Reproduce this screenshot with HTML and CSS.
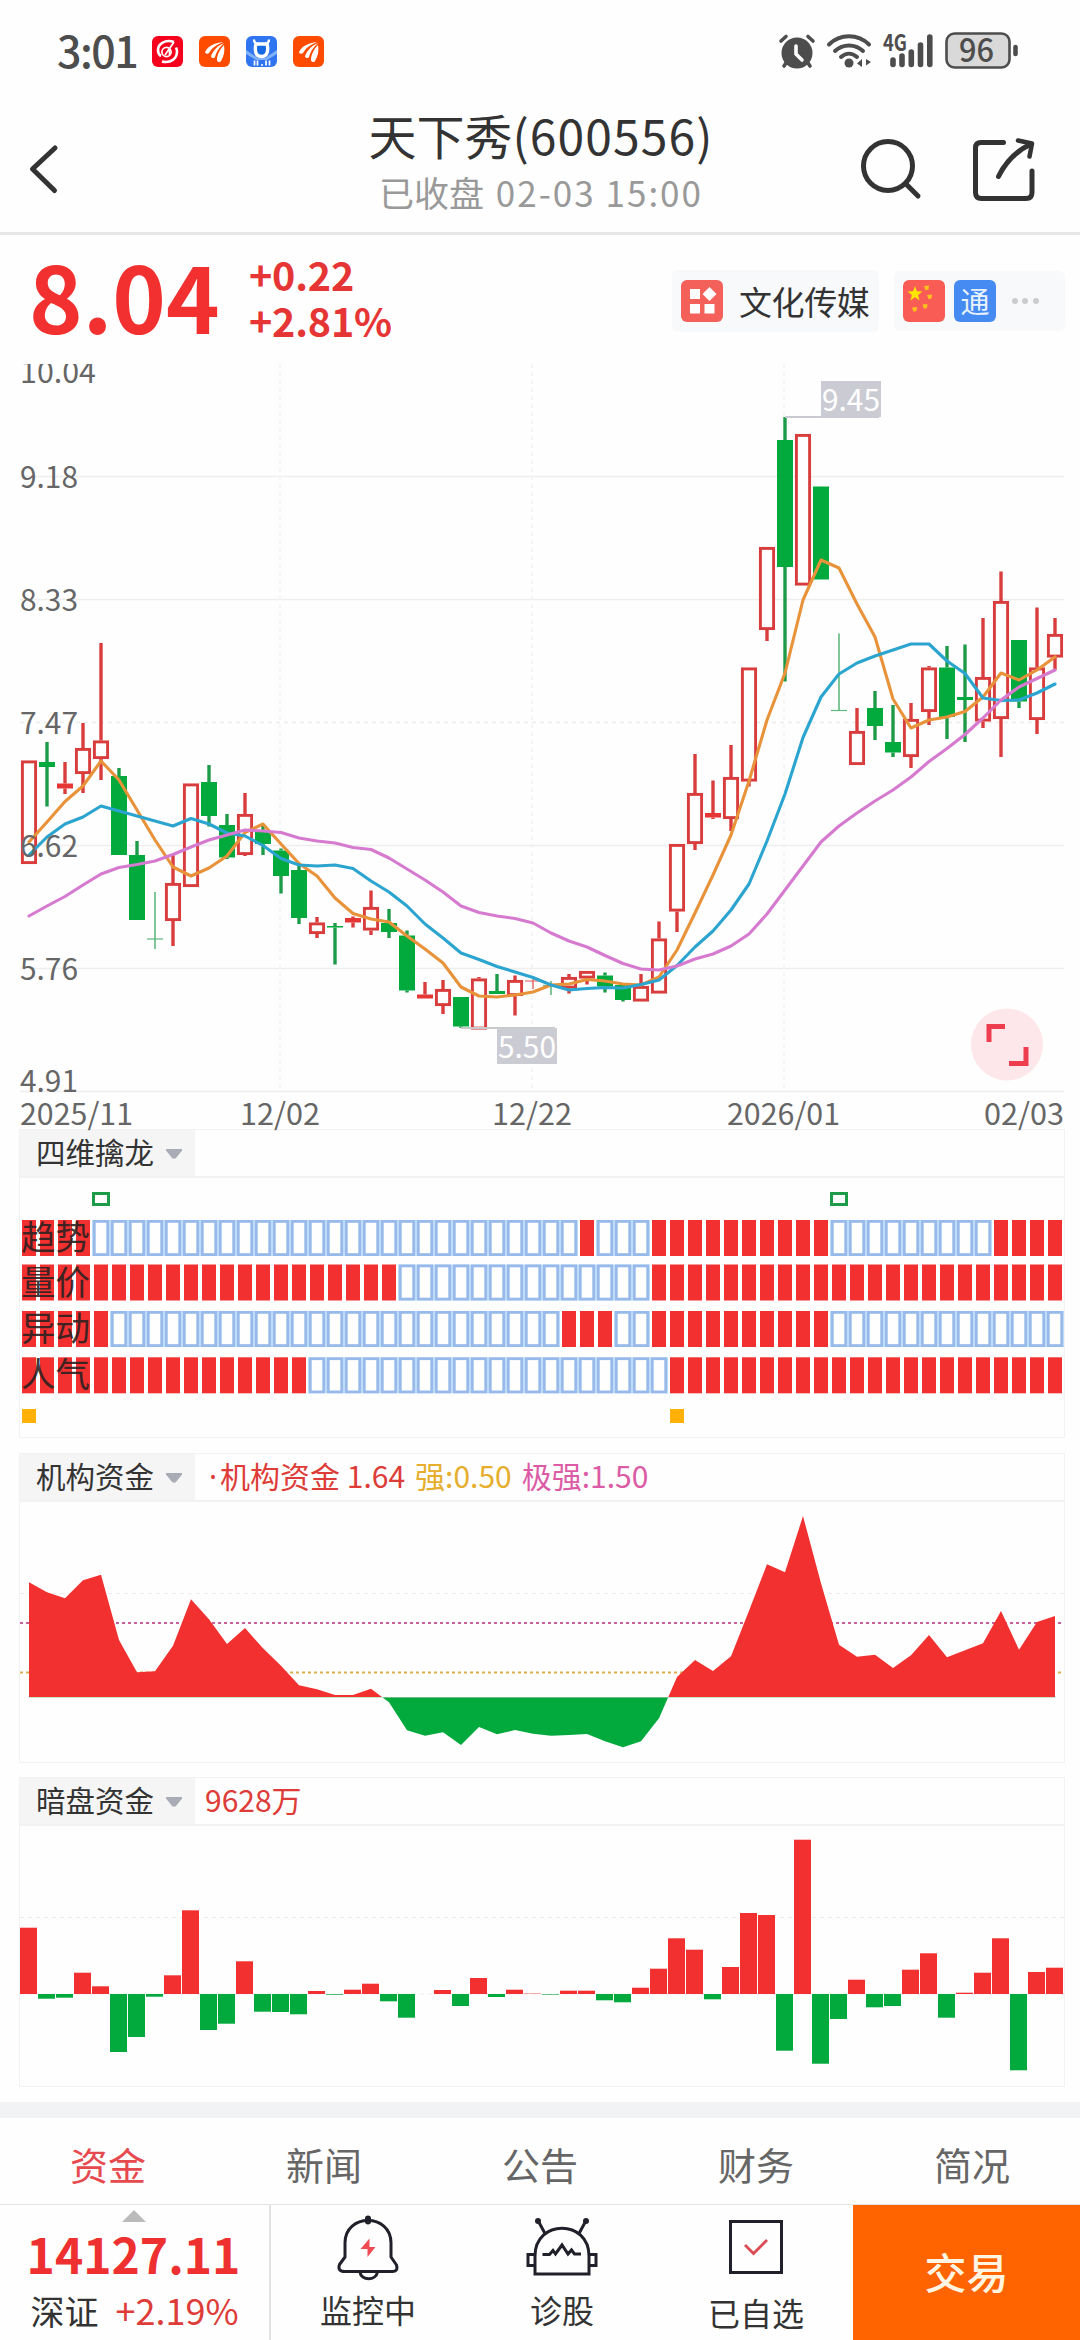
FILE: index.html
```
<!DOCTYPE html>
<html lang="zh-CN">
<head>
  <meta charset="UTF-8" />
  <meta name="viewport" content="width=device-width, initial-scale=1.0"/>
  <title>天下秀(600556)</title>
  <link rel="stylesheet" href="styles.css">
</head>
<body>
  <!-- Barra de estado -->
  <div class="status">
    <span class="clock">3:01</span>
    <div class="apps">
      <svg width="31" height="31" viewBox="0 0 31 31"><rect width="31" height="31" rx="6" fill="#f5001d"/><path d="M22 6C13 3 6 8 6 14c0 3 1 5 3 6M10 25.500c9 2 15-3 15-10 0-2-.5-3-1-4" fill="none" stroke="#fff" stroke-width="2.600"/><circle cx="14.500" cy="16" r="4.600" fill="none" stroke="#fff" stroke-width="1.700"/><path d="M22 6l-9 13M17.500 12v7" stroke="#fff" stroke-width="1.700"/></svg>
      <svg width="31" height="31" viewBox="0 0 31 31"><rect width="31" height="31" rx="6" fill="#ff4b00"/><g fill="#fff"><path d="M6 16C9 10 15 7 24 6c-7 3-11 6-14 11-1 1-4 1-4-1z"/><path d="M12 20c2-5 6-10 13-13-5 5-8 9-9 14-1 2-4 1-4-1z"/><path d="M18 24c0-5 3-11 7-15 1 6 0 11-3 16-1 2-4 1-4-1z"/></g></svg>
      <svg width="31" height="31" viewBox="0 0 31 31"><rect width="31" height="31" rx="6" fill="#2f74f0"/><path d="M0 14l12 8h7l12-8v4l-10 6H10L0 18z" fill="#7fb0fb"/><path d="M10 8c0 0-1 3-.5 7C10 19 12 20.500 15.500 20.500S21 19 21.500 15c.5-4-.5-7-.5-7z" fill="#1668e3" stroke="#fff" stroke-width="3.400"/><path d="M8 3.500c0 3 1.500 4 4 4.500M23 3.500c0 3-1.500 4-4 4.500" stroke="#fff" stroke-width="2.400" fill="none"/><path d="M8.500 24.500v5M11.500 24.500v5M20 24.500v5M23.500 24.500v5" stroke="#fff" stroke-width="1.700"/><circle cx="16" cy="29" r="1" fill="#fff"/></svg>
      <svg width="31" height="31" viewBox="0 0 31 31"><rect width="31" height="31" rx="6" fill="#ff4b00"/><g fill="#fff"><path d="M6 16C9 10 15 7 24 6c-7 3-11 6-14 11-1 1-4 1-4-1z"/><path d="M12 20c2-5 6-10 13-13-5 5-8 9-9 14-1 2-4 1-4-1z"/><path d="M18 24c0-5 3-11 7-15 1 6 0 11-3 16-1 2-4 1-4-1z"/></g></svg>
    </div>
    <svg class="signals" width="240" height="50" viewBox="779 21 240 50">
      <g stroke="#4d4d4d" fill="none" stroke-linecap="round">
        <circle cx="797" cy="53" r="15.500" fill="#4d4d4d" stroke="none"/>
        <path d="M781 41l5-4.500M813 41l-5-4.500M786 63l-2 3M808 63l2 3" stroke-width="3.600"/>
        <path d="M796 46v8l6 6" stroke="#fff" stroke-width="3.600"/>
        <path d="M829 44.500c11-11 29-11 40 0M835 51c8-7.500 20-7.500 28 0M841 57c5-4.500 11-4.500 16 0" stroke-width="4"/>
        <circle cx="849" cy="63" r="4.500" fill="#4d4d4d" stroke="none"/>
        <path d="M862 59v8l-5-3.500zM864.500 59v8M866 59l5 3-5 3.500" fill="#4d4d4d" stroke="none"/>
        <path d="M893 60v4.500M902 56v8.500M911.300 52v12.500M920.500 45v19.500M929.800 37v27.500" stroke-width="5.600"/>
        <rect x="946.500" y="33.500" width="63" height="34" rx="8" fill="#d9d9d9" stroke-width="2.600"/>
        <path d="M1015.500 47v7" stroke-width="4.600"/>
      </g>
      <text class="net" x="883" y="50.500" textLength="24" lengthAdjust="spacingAndGlyphs">4G</text>
      <text class="batt" x="959" y="62" textLength="35" lengthAdjust="spacingAndGlyphs">96</text>
    </svg>
  </div>

  <!-- Cabecera -->
  <header class="header">
    <svg class="back" width="36" height="56" viewBox="26 141 36 56"><path d="M55 148L32.500 169 54.500 190.500" fill="none" stroke="#333" stroke-width="5" stroke-linecap="round" stroke-linejoin="round"/></svg>
    <div class="title">
      <h1>天下秀<span>(600556)</span></h1>
      <p>已收盘 <span>02-03 15:00</span></p>
    </div>
    <svg class="actions" width="186" height="70" viewBox="856 134 186 70">
      <g fill="none" stroke="#333" stroke-width="5" stroke-linecap="round">
        <circle cx="888" cy="166" r="24.500"/>
        <path d="M905.500 183.500L918 196"/>
        <path d="M1003.500 142.500H981q-5.500 0-5.500 5.500v44.500q0 6 6 6h44.500q6 0 6-6V171"/>
        <path d="M998.500 176.500C1005 163 1014 152 1031 144" stroke-linejoin="miter"/>
        <path d="M1018 140.500l14 3-2.500 13" stroke-linejoin="round" stroke-width="4.500"/>
      </g>
    </svg>
  </header>

  <!-- Precio -->
  <section class="quote">
    <div class="price">8.04</div>
    <div class="change"><span>+0.22</span><span>+2.81%</span></div>
    <div class="tag sector">
      <svg width="42" height="42" viewBox="0 0 42 42"><rect width="42" height="42" rx="6" fill="#f4605a"/><path d="M9 9h10v10H9zM9 24h10v9.500H9zM23.500 24h10v9.500h-10zM28.500 7l7 7-7 7-7-7z" fill="#fff"/></svg>
      <span>文化传媒</span>
    </div>
    <div class="tag badges">
      <svg width="42" height="42" viewBox="0 0 42 42"><rect width="42" height="42" rx="6" fill="#f85c54"/><path d="M12 6l1.900 5.300 5.600.2-4.400 3.500 1.500 5.400-4.600-3.200L7.400 20.400 8.900 15 4.500 11.500l5.600-.2z" fill="#ffe600"/><g fill="#ffc21c"><path d="M21 6l5-.5-.5 4-3 .8zM24 15l5-.5-.5 4-3 .8zM19.500 24.500l5-.5-.5 4-3 .8zM9 27.500l5-.5-.5 4-3 .8z"/></g></svg>
      <span class="tong">通</span>
      <i></i><i></i><i></i>
    </div>
  </section>

  <svg id="kline" class="kline" width="1080" height="765" viewBox="0 364 1080 765"></svg>

  <section class="panel siwei">
    <div class="panel-head"><button>四维擒龙<b></b></button></div>
    <svg id="siwei" width="1044" height="260" viewBox="20 1178 1044 260"></svg>
  </section>

  <section class="panel jigou">
    <div class="panel-head">
      <button>机构资金<b></b></button>
      <span class="up"><em>·</em>机构资金 1.64</span><span class="strong">强:0.50</span><span class="extreme">极强:1.50</span>
    </div>
    <svg id="jigou" width="1044" height="260" viewBox="20 1502 1044 260"></svg>
  </section>

  <section class="panel anpan">
    <div class="panel-head"><button>暗盘资金<b></b></button><span class="up">9628万</span></div>
    <svg id="anpan" width="1044" height="260" viewBox="20 1826 1044 260"></svg>
  </section>

  <nav class="tabs">
    <a class="active">资金</a><a>新闻</a><a>公告</a><a>财务</a><a>简况</a>
  </nav>

  <footer class="bottom">
    <div class="index">
      <i class="caret"></i>
      <strong>14127.11</strong>
      <p>深证<span>+2.19%</span></p>
    </div>
    <div class="tool">
      <svg width="64" height="68" viewBox="336 2214 64 68">
        <g fill="none" stroke="#20202a" stroke-width="3" stroke-linejoin="round">
          <path d="M345 2257V2243c0-30 46-30 46 0v14l5.500 8q2 7-5 6.500H345q-8 0-5.500-7z"/>
          <path d="M360 2272c1 9 16 9 17.500 0"/>
          <path d="M368 2218.500v3" stroke-width="6" stroke-linecap="round"/>
        </g>
        <path d="M369.500 2238.500v8.500h6l-8 10v-8h-7z" fill="#f04a52"/>
      </svg>
      <span>监控中</span>
    </div>
    <div class="tool">
      <svg width="74" height="68" viewBox="525 2214 74 68">
        <g fill="none" stroke="#20202a" stroke-width="3">
          <path d="M535 2274V2256c0-37 54-37 54 0v18z"/>
          <path d="M535 2254.500h-7v11h7M589 2254.500h7v11h-7"/>
          <path d="M538.500 2221.500l6.500 12M585.500 2221.500l-6.500 12"/>
          <path d="M542.500 2254.500h7l3.500-4 2.500 3.500 6.500-9 6 9 3.500-4 3 4h6.500"/>
        </g>
        <circle cx="538" cy="2221" r="3" fill="#20202a"/><circle cx="586" cy="2221" r="3" fill="#20202a"/>
      </svg>
      <span>诊股</span>
    </div>
    <div class="tool last">
      <svg width="64" height="68" viewBox="724 2214 64 68">
        <rect x="730.500" y="2221.500" width="51" height="51" fill="none" stroke="#20202a" stroke-width="3"/>
        <path d="M745 2245l8.500 8.500L767 2240" fill="none" stroke="#dc4a54" stroke-width="2.800"/>
      </svg>
      <span>已自选</span>
    </div>
    <div class="trade">交易</div>
  </footer>

  <script src="charts.js"></script>
</body>
</html>
```

FILE: styles.css
```
* {
  box-sizing: border-box;
}

body {
  margin: 0;
  width: 1080px;
  height: 2340px;
  overflow: hidden;
  background: #fefefe;
  color: #333;
  font-family: 'Noto Sans CJK SC', 'Noto Sans', sans-serif;
  display: flex;
  flex-direction: column;
}

svg {
  display: block;
  flex: none;
}

h1, p {
  margin: 0;
  font-weight: 400;
}

/* Barra de estado */
.status {
  height: 104px;
  flex: none;
  display: flex;
  align-items: flex-start;
  padding: 21px 61px 0 57px;
}

.clock {
  width: 95px;
  padding-top: 9px;
  font-size: 43px;
  line-height: 38px;
  letter-spacing: -1.500px;
  font-weight: 500;
  color: #4d4d4d;
}

.apps {
  display: flex;
  gap: 16px;
  padding-top: 15px;
}

.signals {
  margin-left: auto;
  overflow: visible;
}

.net {
  font-size: 23px;
  font-weight: 700;
  fill: #4d4d4d;
}

.batt {
  font-size: 33px;
  font-weight: 500;
  fill: #4d4d4d;
}

/* Cabecera */
.header {
  height: 131px;
  flex: none;
  display: flex;
  justify-content: space-between;
  border-bottom: 3px solid #e6e6e6;
  padding: 0 38px 0 26px;
}

.back {
  margin-top: 37px;
  margin-right: 164px;
}

.actions {
  margin-top: 30px;
}

.title {
  text-align: center;
  white-space: nowrap;
}

.title h1 {
  font-size: 48px;
  line-height: 60px;
  color: #333;
}

.title h1 span {
  letter-spacing: 1.100px;
}

.title p {
  font-size: 35px;
  line-height: 50px;
  margin-top: 3px;
  color: #999;
}

.title p span {
  margin-left: 4px;
  letter-spacing: 2px;
}

/* Precio y etiquetas */
.quote {
  height: 129px;
  flex: none;
  display: flex;
  align-items: flex-start;
  padding: 0 15px 0 29px;
}

.price {
  width: 220px;
  padding-top: 13px;
  font-size: 91px;
  line-height: 92px;
  font-weight: 700;
  color: #f33030;
}

.change {
  display: flex;
  flex-direction: column;
  padding-top: 16px;
  font-size: 39.500px;
  line-height: 46px;
  font-weight: 700;
  letter-spacing: -0.200px;
  color: #e63535;
}

.tag {
  display: flex;
  align-items: center;
  background: #f8f9fb;
  border-radius: 6px;
}

.sector {
  width: 207px;
  height: 62px;
  margin: 35px 15px 0 auto;
  padding-left: 9px;
}

.sector span {
  margin-left: 16px;
  font-size: 33px;
  line-height: 40px;
  letter-spacing: -0.400px;
}

.badges {
  width: 171px;
  height: 60px;
  margin-top: 36px;
  padding-left: 9px;
}

.tong {
  width: 42px;
  height: 42px;
  margin: 0 16px 0 9px;
  border-radius: 6px;
  background: #458bf2;
  color: #e8f2ff;
  font-size: 29px;
  line-height: 40px;
  text-align: center;
}

.badges i {
  width: 6px;
  height: 6px;
  margin-right: 4.300px;
  border-radius: 50%;
  background: #ccc;
}

/* Velas */
.kline {
  overflow: visible;
  clip-path: inset(0 0 -12px 0);
}

.kline text {
  font-size: 30px;
  fill: #666;
}

.kline .mark {
  fill: #fff;
}

/* Paneles de indicadores */
.panel {
  width: 1046px;
  margin-left: 19px;
  flex: none;
  border: 1.500px solid #f1f2f4;
}

.siwei {
  height: 309px;
}

.jigou {
  height: 310px;
  margin-top: 15px;
}

.anpan {
  height: 310px;
  margin-top: 14px;
}

.panel-head {
  height: 48px;
  display: flex;
  align-items: stretch;
  border-bottom: 2px solid #f1f2f4;
  font-size: 30px;
  line-height: 43px;
  white-space: pre;
}

.panel-head button {
  width: 175px;
  margin-right: 10px;
  padding: 0 0 3px 16px;
  border: 0;
  background: #f5f5f5;
  color: #333;
  font: inherit;
  font-size: 29.500px;
  display: flex;
  align-items: center;
}

.panel-head b {
  width: 16px;
  height: 10px;
  margin: 4px 0 0 12px;
  background: #a9abb5;
  clip-path: polygon(0 0, 100% 0, 100% 20%, 60% 100%, 40% 100%, 0 20%);
}

.panel-head span {
  margin-right: 10px;
}

.panel-head em {
  margin: 0 3px 0 4px;
  font-family: 'Noto Sans', sans-serif;
  font-style: normal;
  line-height: 30px;
}

.up {
  color: #dd3c38;
}

.strong {
  color: #e6ae2c;
}

.extreme {
  color: #dc5ba5;
}

.row-name {
  font-size: 34px;
  fill: #282020;
  fill-opacity: 0.88;
}

/* Pestañas */
.tabs {
  height: 103px;
  flex: none;
  margin-top: 15px;
  border-top: 16px solid #f2f3f5;
  border-bottom: 1.500px solid #e4e4e4;
  display: flex;
}

.tabs a {
  flex: 1;
  text-align: center;
  font-size: 38px;
  line-height: 91px;
  color: #666;
}

.tabs .active {
  color: #e64a4f;
}

/* Barra inferior */
.bottom {
  flex: 1;
  display: flex;
  text-align: center;
}

.index {
  width: 271px;
  border-right: 2px solid #e2e2e2;
  display: flex;
  flex-direction: column;
}

.caret {
  width: 24px;
  height: 12px;
  margin: 5px 0 0 122px;
  background: #bbb;
  clip-path: polygon(50% 0, 100% 100%, 0 100%);
}

.index strong {
  margin: 2px 2px 2px 0;
  font-size: 48px;
  line-height: 58px;
  color: #ee3030;
}

.index p {
  font-size: 34px;
  line-height: 50px;
}

.index p span {
  margin-left: 17px;
  font-size: 36px;
  color: #dd3c38;
}

.tool {
  width: 194px;
  padding-top: 9px;
  font-size: 32px;
  line-height: 48px;
  display: flex;
  flex-direction: column;
  align-items: center;
}

.tool span {
  margin-top: 3px;
}

.last span {
  margin-top: 6px;
}

.trade {
  flex: 1;
  background: #ff6400;
  color: #fff5e2;
  font-size: 42px;
  font-weight: 500;
  line-height: 132px;
}
```

FILE: charts.js
```
const RED = '#d83c3c';
const FILL_RED = '#f23030';
const GREEN = '#1d9b49';
const FILL_GREEN = '#02a93c';

// centro horizontal de cada día
const cx = i => 29 + i * 18;

// [color, máximo, techo, suelo, mínimo]; 't' = trazo fino
const candles = [
  ['r', 760.5, 760.5, 864, 864], ['g', 742, 762, 767, 806.5], ['r', 762, 783.5, 788.5, 794], ['r', 723, 748, 774, 793], ['r', 643, 740.5, 759, 780],
  ['g', 768, 776, 855, 855], ['g', 841, 855, 920, 920], ['g', 892, 939, 939, 949, 't'], ['r', 855, 883, 921, 946], ['r', 783.5, 783.5, 887, 887],
  ['g', 765, 782, 816, 826.5], ['g', 814, 825, 857.5, 859], ['r', 793, 814, 855, 856], ['g', 824, 830.5, 844, 855], ['g', 848.5, 850.5, 876, 893.5],
  ['g', 865, 870, 918, 924], ['r', 917, 922.5, 934, 938], ['g', 923, 926, 927.5, 964.5], ['r', 916.5, 918, 922.5, 927.5], ['r', 890.5, 907, 930.5, 935],
  ['g', 909, 923, 932, 938], ['g', 930.5, 935.5, 990.5, 992.5], ['r', 982, 994.5, 998.5, 998.5], ['r', 980, 989, 1006, 1014], ['g', 997, 997, 1026.5, 1028],
  ['r', 977, 978.5, 1029.5, 1029.5], ['g', 974, 991, 994, 994], ['r', 975.5, 980, 996, 1015.5], ['r', 977, 981, 981, 989, 't'], ['g', 981, 985.5, 985.5, 995, 't'],
  ['r', 974, 977, 988.5, 993.5], ['r', 971, 971, 978.5, 984.5], ['g', 972.5, 975.5, 986.5, 992.5], ['g', 985, 985, 1000, 1001.5], ['r', 974, 986, 1001.5, 1001.5],
  ['r', 921.5, 938.5, 993.5, 993.5], ['r', 844, 844, 911.5, 932], ['r', 754, 793, 844, 850], ['r', 780.5, 813, 817.5, 819], ['r', 745, 777, 819, 831],
  ['r', 667.5, 667.5, 781.5, 786.5], ['r', 547, 547, 630, 641], ['g', 417, 440, 567, 681.5], ['r', 434, 434, 585.5, 585.5], ['g', 486.5, 486.5, 579.5, 579.5],
  ['g', 633.5, 710.5, 710.5, 710.5, 't'], ['r', 708, 731, 765, 765], ['g', 691, 708, 726, 740], ['g', 705, 742, 752.5, 757], ['r', 703, 719, 757, 768],
  ['r', 666, 667.5, 712, 725], ['g', 646, 667.5, 717, 739], ['g', 644.5, 697, 700, 742], ['r', 618, 677, 721.5, 728], ['r', 571.5, 601, 719, 757],
  ['g', 640, 640, 701.5, 708], ['r', 607.5, 667.5, 720, 734], ['r', 618, 634, 657.5, 670]
];

const ma5 = [842, 822, 801.5, 786, 761, 780, 810, 840, 867, 876, 868, 856, 832.5, 824, 844, 863.5, 876, 898, 913.5, 919, 922, 936, 949, 963, 987, 996, 997, 995, 992, 985, 984, 979.5, 981, 984, 985, 977, 950, 913, 875, 835, 781, 720, 673, 600, 560, 568, 604, 637, 699, 728, 720, 717, 711.5, 697, 673, 680, 670, 657];
const ma10 = [855, 837, 824, 817, 806, 811, 816, 821, 826, 818.5, 824, 833, 836, 845.5, 858.5, 865, 866, 865, 868.5, 881, 892, 906, 924, 938, 953, 959.5, 966.5, 972, 977.5, 985, 990, 988.5, 987.5, 988, 984.5, 980, 965.5, 947, 931, 910, 884, 841, 794, 737.5, 697, 674, 663, 656, 650, 644, 644, 661, 673.5, 698, 700.5, 700, 693, 684];
const ma20 = [916, 906, 896.5, 885, 874, 867.5, 864.5, 861, 854.5, 847, 840, 835, 830, 831, 832.5, 838, 841, 843, 847.5, 849.5, 858, 869, 880, 892, 906, 912.5, 916, 918.5, 923, 933, 941, 947, 955.5, 963.5, 969, 970, 966, 959, 954, 946, 934, 914, 890, 866, 842, 826, 813, 801, 790, 777, 761.5, 748.5, 734.5, 718, 700, 687, 678.5, 670];

function line(x1, y1, x2, y2, stroke, w, dash) {
  return `<line x1="${x1}" y1="${y1}" x2="${x2}" y2="${y2}" stroke="${stroke}" stroke-width="${w}"${dash ? ` stroke-dasharray="${dash}"` : ''}/>`;
}

function rect(x, y, w, h, fill, extra) {
  return `<rect x="${x}" y="${y}" width="${w}" height="${h}" fill="${fill}" ${extra || ''}/>`;
}

function text(x, y, str, len, cls) {
  return `<text x="${x}" y="${y}" textLength="${len}" lengthAdjust="spacingAndGlyphs" class="${cls || ''}">${str}</text>`;
}

function curve(values, color) {
  const pts = values.map((y, i) => `${cx(i)},${y}`).join(' ');
  return `<polyline points="${pts}" fill="none" stroke="${color}" stroke-width="3.100" stroke-linejoin="round" stroke-linecap="round"/>`;
}

function drawKline() {
  let s = '';
  [476.5, 599.5, 845.5, 968.5, 1091.5].forEach(y => s += line(20, y, 1064, y, '#eeeeef', 1.3));
  s += line(20, 722.5, 1064, 722.5, '#ececec', 1.3, '4 4');
  [280, 532, 784].forEach(x => s += line(x, 364, x, 1091, '#f2f2f4', 1.5, '4 4'));

  candles.forEach(([c, high, top, bottom, low, thin], i) => {
    const x = cx(i);
    const color = c === 'r' ? RED : GREEN;
    if (thin) {
      s += `<g opacity="0.7">${line(x, high, x, low, color, 1.6)}${line(x - 8, top, x + 8, top, color, 1.2)}</g>`;
      return;
    }
    if (high < top) s += line(x, high, x, top, color, 3.4);
    if (low > bottom) s += line(x, bottom, x, low, color, 3.4);
    if (c === 'g') {
      s += rect(x - 8, top, 16, bottom - top, FILL_GREEN);
    } else if (bottom - top < 6) {
      s += rect(x - 8, top, 16, bottom - top, '#e63535');
    } else {
      s += rect(x - 6.6, top + 1.4, 13.2, bottom - top - 2.8, '#fefefe', `stroke="${RED}" stroke-width="2.900"`);
    }
  });

  s += curve(ma5, '#e8923a') + curve(ma10, '#2ba4cf') + curve(ma20, '#d67ad0');

  // máximo y mínimo
  s += line(785, 417, 879, 417, '#c9c9d1', 2) + rect(821, 381, 60, 36, '#cbcbd3');
  s += text(822, 411, '9.45', 58, 'mark');
  s += line(461, 1028, 555, 1028, '#c9c9c9', 2) + rect(497, 1028, 60, 36, '#cbcbd3');
  s += text(498, 1058, '5.50', 58, 'mark');

  [['10.04', 383, 76], ['9.18', 488, 58], ['8.33', 611, 58], ['7.47', 734, 58], ['6.62', 857, 58], ['5.76', 980, 58], ['4.91', 1092, 58]]
    .forEach(([t, y, w]) => s += text(20, y, t, w));
  [['2025/11', 20, 113], ['12/02', 240, 80], ['12/22', 492, 80], ['2026/01', 727, 113], ['02/03', 984, 80]]
    .forEach(([t, x, w]) => s += text(x, 1125, t, w));

  // botón de pantalla completa
  s += '<circle cx="1007" cy="1044.500" r="36" fill="#fde7ea"/>';
  s += '<path d="M989 1042v-15.500h16M1026 1047v16.500h-17" fill="none" stroke="#ee3d4e" stroke-width="5"/>';
  document.getElementById('kline').innerHTML = s;
}

// tramos rojos [desde, hasta] de cada fila
const rows = [
  { name: '趋势', y: 1220, red: [[0, 3], [31, 31], [35, 44], [54, 57]] },
  { name: '量价', y: 1264.5, red: [[0, 20], [35, 57]] },
  { name: '异动', y: 1311, red: [[0, 4], [30, 32], [35, 44]] },
  { name: '人气', y: 1357.3, red: [[0, 15], [36, 57]] }
];

function drawSiwei() {
  let s = '';
  [4, 45].forEach(i => s += rect(cx(i) - 7.5, 1193.5, 15, 11, 'none', 'stroke="#1d9b49" stroke-width="3"'));
  rows.forEach(row => {
    for (let i = 0; i < 58; i++) {
      const on = row.red.some(([a, b]) => i >= a && i <= b);
      if (on) {
        s += rect(cx(i) - 7, row.y, 14, 36, FILL_RED);
      } else {
        s += rect(cx(i) - 9, row.y, 18, 36, '#c3e0fc');
        s += rect(cx(i) - 6.7, row.y + 1.4, 13.4, 33.2, '#fefefe', 'stroke="#98baea" stroke-width="2.800"');
      }
    }
    s += text(21, row.y + 30, row.name, 69, 'row-name');
  });
  [0, 36].forEach(i => s += rect(cx(i) - 7, 1409, 14, 14, '#ffb108'));
  document.getElementById('siwei').innerHTML = s;
}

const funds = [1582.3, 1592.3, 1598.3, 1580.3, 1574.7, 1640, 1672.3, 1671.3, 1645.7, 1599.3, 1619.3, 1644, 1628, 1648.3, 1665.7, 1685.3, 1689.3, 1695, 1695, 1688.7, 1702.3, 1730.3, 1735.7, 1732.3, 1745, 1727, 1734.3, 1730, 1733.7, 1735.7, 1735, 1734, 1741.3, 1747.3, 1741.3, 1718.3, 1677, 1660, 1671, 1656.3, 1610.7, 1564.3, 1572.3, 1516, 1583.3, 1644.7, 1656.7, 1654.7, 1668, 1655.3, 1635, 1657.3, 1650.3, 1643.3, 1611, 1649.7, 1622, 1616];

function drawJigou() {
  const base = 1697.3;
  const d = `M29 ${base}` + funds.map((y, i) => `L${cx(i)} ${y}`).join('') + `L${cx(57)} ${base}z`;
  let s = `<clipPath id="above"><rect x="20" y="1502" width="1044" height="${base - 1502}"/></clipPath>`;
  s += `<clipPath id="below"><rect x="20" y="${base}" width="1044" height="60"/></clipPath>`;
  s += line(20, 1593.5, 1064, 1593.5, '#ebebeb', 1.2, '4 4');
  s += line(20, 1623, 1064, 1623, '#c9609b', 2, '3 3');
  s += line(20, 1672.5, 1064, 1672.5, '#deae4b', 2, '3 3');
  s += `<path d="${d}" fill="${FILL_RED}" clip-path="url(#above)"/><path d="${d}" fill="${FILL_GREEN}" clip-path="url(#below)"/>`;
  document.getElementById('jigou').innerHTML = s;
}

const flow = [66.3, -4.7, -3.7, 21.3, 7.7, -58, -43, -2.7, 18.7, 83.7, -36, -29.7, 32.7, -17.7, -18, -20.3, 3, -0.7, 4.3, 10.3, -7.3, -23.7, 0, 4, -12, 16, -3, 4.3, 0.4, -0.6, 3.3, 3.3, -6.3, -8.3, 6.3, 25.3, 55.7, 44.3, -5.3, 27, 81, 79, -56.7, 154.3, -69.7, -25, 14.3, -13.3, -12, 24.3, 40.7, -23.7, 1.3, 21.3, 55.7, -76.3, 22, 26.3];

function drawAnpan() {
  const base = 1994;
  let s = line(20, 1917.5, 1064, 1917.5, '#ebebeb', 1.2, '4 4') + line(20, base, 1064, base, '#ebebeb', 1.2, '4 4');
  flow.forEach((v, i) => {
    s += rect(20 + i * 18, v > 0 ? base - v : base, 17, Math.abs(v), v > 0 ? FILL_RED : FILL_GREEN);
  });
  document.getElementById('anpan').innerHTML = s;
}

drawKline();
drawSiwei();
drawJigou();
drawAnpan();
```
